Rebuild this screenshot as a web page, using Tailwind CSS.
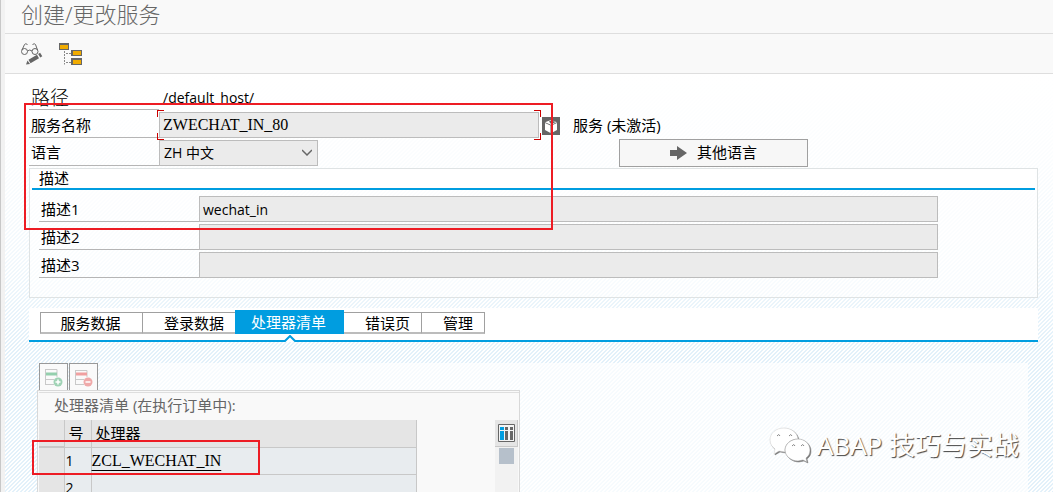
<!DOCTYPE html>
<html lang="zh-CN">
<head>
    <meta charset="UTF-8">
    <meta name="viewport" content="width=device-width, initial-scale=1.0">
    <title>创建/更改服务</title>
    <script src="https://cdn.jsdelivr.net/npm/@tailwindcss/browser@4"></script>
    <style>
        body {
            font-family: "Open Sans", "Noto Sans CJK SC", sans-serif;
        }
        .value {
            font-family: "Liberation Serif", "Noto Sans CJK SC", serif;
        }
        .stripes {
            background-image:
                linear-gradient(to bottom, #ffffff 0%, #ffffffdd 20%, #ffffff88 45%, #ffffff00 65%),
                linear-gradient(135deg, #e3f1fa 25%, #fff 25%, #fff 50%, #e3f1fa 50%, #e3f1fa 75%, #fff 75%);
            background-size: 100% 100%, 4px 4px;
        }
    </style>
</head>
<body class="h-screen overflow-hidden bg-white text-sm text-black">
<div class="relative flex h-full flex-col overflow-hidden border-l border-[#c8c8c8]">
    <div class="flex min-h-0 flex-1 bg-[#f2f2f2] pl-1">
    <div class="flex min-w-0 flex-1 flex-col">

    <header class="shrink-0 bg-[#f9f9f9]">
        <h1 class="h-[34px] border-b border-[#dedede] pl-4 text-[22px] leading-7 font-light text-[#666]">创建/更改服务</h1>
        <div class="flex h-10 items-center gap-4 border-b border-[#dedede] pl-4">
            <button type="button" aria-label="显示/更改">
                <svg class="size-[22px]" viewBox="0 0 22 22" fill="none" stroke="#666">
                    <circle cx="3.500" cy="8.500" r="3"/>
                    <circle cx="14" cy="8.500" r="3"/>
                    <path d="M6.500 8q2.300-2 4.500 0M1 7L3.500 1.500Q4.500 0 6.500 1.500M16.500 7L14.500 1.500Q13.500 0 11.500 1.500"/>
                    <path d="M8.500 18.500L17 13.500" stroke-width="4"/>
                    <path d="M18.200 12.800l2-1.300" stroke-width="4"/>
                    <path d="M5 21.500l1.500-4 2.500 3.500z" fill="#666" stroke="none"/>
                </svg>
            </button>
            <button type="button" aria-label="层次结构">
                <svg class="size-[24px]" viewBox="0 0 24 24">
                    <path d="M5.500 9v13.500M7 11.500h6M7 20.500h6" fill="none" stroke="#888" stroke-dasharray="2 1"/>
                    <path fill="#666" d="M0 1h10v7H0zM12 8h11v6H12zM12 16h11v7H12z"/>
                    <path fill="#f0ab00" d="M1 3h8v4H1zM14 9h8v4h-8zM14 18h8v4h-8z"/>
                </svg>
            </button>
        </div>
    </header>

    <main class="stripes flex min-h-0 flex-1 flex-col pt-[14px] pr-[15px] pl-6">
        <section class="shrink-0">
            <div class="flex h-[22px] items-start leading-5">
                <span class="h-[22px] w-[130px] border-b border-[#b5b5b5] pl-0.5 text-[19px] font-light">路径</span>
                <span class="pl-1">/default_host/</span>
            </div>
            <div class="flex h-7 items-end">
                <label for="service" class="h-7 w-[130px] border-b border-[#b5b5b5] pl-0.5 text-[15px] leading-[30px]">服务名称</label>
                <div class="relative w-[380px]">
                    <input id="service" value="ZWECHAT_IN_80" readonly class="value block h-[26px] w-full border border-[#bcbcbc] bg-[#ebebeb] px-[3px] text-base">
                    <span class="absolute -top-0.5 -left-0.5 size-[7px] border-t border-l border-[#c00]"></span>
                    <span class="absolute -bottom-0.5 -left-0.5 size-[7px] border-b border-l border-[#c00]"></span>
                    <span class="absolute -top-0.5 -right-0.5 size-[7px] border-t border-r border-[#c00]"></span>
                    <span class="absolute -right-0.5 -bottom-0.5 size-[7px] border-r border-b border-[#c00]"></span>
                </div>
                <svg class="mb-[3px] ml-[3px] size-[18px]" viewBox="0 0 18 18">
                    <path fill="#666" d="M0 0h18v18H0z"/>
                    <path fill="#fff" d="M3 6l5.500 2.500V16L3 13zM15 6L9.500 8.500V16L15 13z"/>
                    <path fill="#fff" d="M3 5.200L9 3l6 2.200L9 7.800z"/>
                    <path fill="#666" d="M7 4.500L9 3.500l5 1.500L9 7z"/>
                </svg>
                <span class="ml-[13px] text-[15px] leading-[26px]">服务 (未激活)</span>
            </div>
            <div class="flex h-[30px] items-start">
                <label for="language" class="h-7 w-[130px] border-b border-[#b5b5b5] pl-0.5 text-[15px] leading-[29px]">语言</label>
                <div class="relative mt-0.5 w-[159px]">
                    <select id="language" class="block h-[26px] w-full appearance-none border border-[#bcbcbc] bg-[#ebebeb] pl-1 text-sm">
                        <option>ZH 中文</option>
                    </select>
                    <svg class="pointer-events-none absolute top-2 right-1.5 h-2.5 w-2.5" viewBox="0 0 10 10" fill="none" stroke="#666" stroke-width="1.500"><path d="M0 2l5 5 5-5"/></svg>
                </div>
                <button type="button" class="mt-px ml-[301px] flex h-7 w-[189px] items-center justify-center gap-2.5 border border-[#a0a0a0] bg-[#f7f7f7] text-[15px]">
                    <svg class="h-[14px] w-[17px]" viewBox="0 0 17 14"><path fill="#666" d="M0 4h7V0l10 7-10 7v-4H0z"/></svg>
                    其他语言
                </button>
            </div>
        </section>

        <fieldset class="h-[130px] shrink-0 border border-[#dfe3e4] bg-white/60 px-0.5">
            <h2 class="h-[21px] border-b-2 border-[#009de0] bg-white pl-[7px] text-[15px] leading-[18px]">描述</h2>
            <div class="mt-1.5 mr-[97px] ml-[7px] flex flex-col gap-0.5">
                <div class="flex">
                    <label for="desc1" class="h-[26px] w-40 border-b border-[#b5b5b5] pl-0.5 text-[15px] leading-[27px]">描述1</label>
                    <input id="desc1" value="wechat_in" readonly class="h-[26px] min-w-0 flex-1 border border-[#bcbcbc] bg-[#ebebeb] px-[3px]">
                </div>
                <div class="flex">
                    <label for="desc2" class="h-[26px] w-40 border-b border-[#b5b5b5] pl-0.5 text-[15px] leading-[27px]">描述2</label>
                    <input id="desc2" readonly class="h-[26px] min-w-0 flex-1 border border-[#bcbcbc] bg-[#ebebeb] px-[3px]">
                </div>
                <div class="flex">
                    <label for="desc3" class="h-[26px] w-40 border-b border-[#b5b5b5] pl-0.5 text-[15px] leading-[27px]">描述3</label>
                    <input id="desc3" readonly class="h-[26px] min-w-0 flex-1 border border-[#bcbcbc] bg-[#ebebeb] px-[3px]">
                </div>
            </div>
        </fieldset>

        <nav class="mt-[10px] flex h-[34px] shrink-0 items-start border-b-2 border-[#009de0] bg-white pt-0.5 pl-[11px] text-[15px]">
            <button type="button" class="mt-0.5 h-[22px] w-[103px] border border-b-2 border-[#a0a0a0] border-b-[#bcbcbc] pr-0.5 leading-[18px]">服务数据</button>
            <button type="button" class="mt-0.5 h-[22px] w-[92px] border-t border-b-2 border-[#a0a0a0] border-b-[#bcbcbc] pl-2.5 leading-[18px]">登录数据</button>
            <button type="button" class="relative h-6 w-[109px] bg-[#009de0] pr-0.5 leading-6 text-white">处理器清单
                <svg class="absolute top-[25px] left-[49px] h-[7px] w-3" viewBox="0 0 12 7"><path d="M0 7l6-6 6 6" fill="#fff" stroke="#009de0" stroke-width="2"/></svg>
            </button>
            <button type="button" class="mt-0.5 h-[22px] w-[78px] border-t border-r border-b-2 border-[#a0a0a0] border-b-[#bcbcbc] pl-2.5 leading-[18px]">错误页</button>
            <button type="button" class="mt-0.5 h-[22px] w-[63px] border-t border-r border-b-2 border-[#a0a0a0] border-b-[#bcbcbc] pl-2.5 leading-[18px]">管理</button>
        </nav>

        <section class="mt-[21px] mr-2.5 ml-2 flex min-h-0 flex-1 flex-col items-start bg-gradient-to-r from-white/0 via-white/70 via-10% to-white/70">
            <div class="flex h-[27px] shrink-0 gap-px pl-0.5">
                <button type="button" aria-label="插入行" class="flex w-[29px] justify-center border border-b-0 border-[#999] bg-[#fafafa] pt-1">
                    <svg class="size-[19px]" viewBox="0 0 19 19" fill="none">
                        <path d="M1 1.500h12V9M1.500 1v15M1 16.500h9M1 11.500h9" stroke="#c9c9c9"/>
                        <path d="M2 6h11" stroke="#94cfad" stroke-width="3"/>
                        <circle cx="14" cy="14" r="4.500" fill="#a0d3b5"/>
                        <path d="M11.500 14h5M14 11.500v5" stroke="#fff" stroke-width="1.500"/>
                    </svg>
                </button>
                <button type="button" aria-label="删除行" class="flex w-[29px] justify-center border border-b-0 border-[#999] bg-[#fafafa] pt-1">
                    <svg class="size-[19px]" viewBox="0 0 19 19" fill="none">
                        <path d="M1 2.500h12V9M1.500 2v15M1 16.500h9M1 11.500h9" stroke="#c9c9c9"/>
                        <path d="M2 6h11" stroke="#f0a0a0" stroke-width="3"/>
                        <circle cx="14" cy="14" r="4.500" fill="#efa9a9"/>
                        <path d="M11.500 14h5" stroke="#fff" stroke-width="1.500"/>
                    </svg>
                </button>
            </div>
            <div class="min-h-0 w-[483px] flex-1 overflow-hidden border border-b-0 border-[#d8d8d8] bg-[#f9f9f9] pt-px pl-px">
                <h3 class="h-7 border-t border-[#dedede] pl-[15px] text-[15px] leading-6 text-[#666]">处理器清单 (在执行订单中):</h3>
                <div class="flex items-start justify-between">
                    <table class="w-[378px] table-fixed border-r border-[#c8c8c8] bg-[#e8ecef] text-left">
                        <thead class="text-[15px]">
                            <tr class="h-[27px] bg-[#e5e5e5]">
                                <th class="w-[25px] border-r border-b-2 border-[#c8c8c8]"></th>
                                <th class="w-[27px] border-r border-b border-[#c8c8c8] pl-1 leading-5 font-normal">号</th>
                                <th class="border-b border-[#c8c8c8] pl-1 leading-5 font-normal">处理器</th>
                            </tr>
                        </thead>
                        <tbody>
                            <tr class="h-[27px]">
                                <td class="border-r border-[#c8c8c8] bg-[#e5e5e5]"></td>
                                <td class="border-r border-b border-[#c8c8c8] pl-px leading-5">1</td>
                                <td class="border-b border-[#c8c8c8] leading-5"><a href="#" class="value text-base underline underline-offset-4">ZCL_WECHAT_IN</a></td>
                            </tr>
                            <tr class="h-[27px]">
                                <td class="border-r border-[#c8c8c8] bg-[#e5e5e5]"></td>
                                <td class="border-r border-b border-[#c8c8c8] pl-px leading-5">2</td>
                                <td class="border-b border-[#c8c8c8]"></td>
                            </tr>
                        </tbody>
                    </table>
                    <div class="mr-px flex h-24 w-[23px] flex-col items-center bg-[#f2f2f2]">
                        <button type="button" aria-label="配置" class="flex h-[27px] w-full shrink-0 items-center justify-center border-r border-b border-[#c8c8c8] bg-[#e5e5e5]">
                            <svg class="h-[18px] w-[17px]" viewBox="0 0 17 18">
                                <path d="M.5 .5h16v17H.5z" fill="#f4f4f4" stroke="#666"/>
                                <path fill="#009de0" d="M2 3h4v3H2zM2 7h4v9H2z"/>
                                <path fill="#666" d="M7 3h3v3H7zM7 7h3v9H7zM12 3h3v3h-3zM12 7h3v9h-3z"/>
                            </svg>
                        </button>
                        <div class="mt-px h-4 w-[15px] bg-[#b6c0cb]"></div>
                    </div>
                </div>
            </div>
        </section>
    </main>
    </div>
    </div>

    <!-- highlight frames -->
    <div class="pointer-events-none absolute top-[103px] left-[23px] h-[127px] w-[529px] border-2 border-[#ed1c24]"></div>
    <div class="pointer-events-none absolute top-[440px] left-[31px] h-[35px] w-[228px] border-2 border-[#ed1c24]"></div>

    <!-- watermark -->
    <div class="pointer-events-none absolute right-[34px] bottom-[29px] flex items-center gap-1.5">
        <svg class="h-9 w-[42px] drop-shadow-[1px_1px_0px_#777]" viewBox="0 0 42 36">
            <path fill="#fff" stroke="#ccc" stroke-width=".5" d="M15 1C7 1 1 6 1 13c0 4 2 7 5 9l-1 5 5-3 6 1c-1-7 5-13 13-13C28 5 22 1 15 1z"/>
            <path fill="#fff" stroke="#999" stroke-width=".5" d="M29 12c-7 0-13 5-13 11s6 11 13 11l5-1 4 2-1-4c3-2 4-5 4-8 0-6-5-11-12-11z"/>
            <path fill="none" stroke="#888" d="M8 9q2-3 3 0M20 9q2-3 3 0M23 19q2-3 3 0M32 19q2-3 3 0"/>
        </svg>
        <span class="text-[26px] leading-9 whitespace-nowrap text-white [text-shadow:1px_1px_1px_#444]">ABAP 技巧与实战</span>
    </div>
</div>
</body>
</html>
